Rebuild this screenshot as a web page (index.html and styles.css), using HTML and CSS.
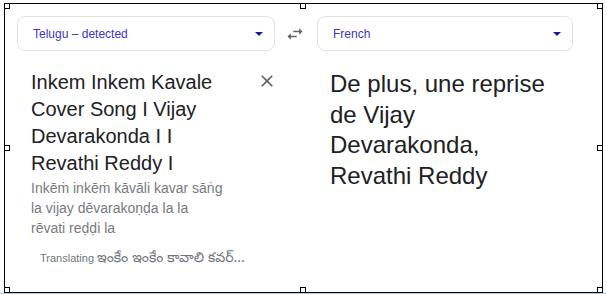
FILE: index.html
```html
<!DOCTYPE html>
<html lang="en">
<head>
    <meta charset="UTF-8">
    <title>Translate</title>
    <link rel="stylesheet" href="styles.css">
</head>
<body>
    <div class="frame">
        <div class="lang-bar">
            <div class="lang-select">
                <span class="lang-name">Telugu – detected</span>
                <span class="caret"></span>
            </div>
            <div class="swap">
                <svg width="20" height="20" viewBox="0 0 24 24"><path d="M6.99 11L3 15l3.99 4v-3H14v-2H6.99v-3zM21 9l-3.99-4v3H10v2h7.01v3L21 9z"/></svg>
            </div>
            <div class="lang-select">
                <span class="lang-name">French</span>
                <span class="caret"></span>
            </div>
        </div>

        <div class="panes">
            <div class="pane source">
                <div class="source-row">
                    <div class="source-text">Inkem Inkem Kavale Cover Song I Vijay Devarakonda I I Revathi Reddy I</div>
                    <div class="clear">
                        <svg width="20" height="20" viewBox="0 0 24 24"><path d="M19 6.41L17.59 5 12 10.59 6.41 5 5 6.41 10.59 12 5 17.59 6.41 19 12 13.41 17.59 19 19 17.59 13.41 12z"/></svg>
                    </div>
                </div>
                <div class="translit">Inkēṁ inkēṁ kāvāli kavar sāṅg la vijay dēvarakoṇḍa la la rēvati reḍḍi la</div>
                <div class="status">Translating <span class="telugu">ఇంకేం ఇంకేం కావాలి కవర్...</span></div>
            </div>
            <div class="pane target">De plus, une reprise de Vijay Devarakonda, Revathi Reddy</div>
        </div>

        <!-- selection handles -->
        <span class="handle tl"></span>
        <span class="handle tm"></span>
        <span class="handle tr"></span>
        <span class="handle ml"></span>
        <span class="handle mr"></span>
        <span class="handle bl"></span>
        <span class="handle bm"></span>
        <span class="handle br"></span>
    </div>
    <div class="blue-line"></div>
</body>
</html>
```

FILE: styles.css
```css
*{
    margin: 0;
    padding: 0;
    box-sizing: border-box;
}
body{
    background: #fff;
    font-family: "Liberation Sans", Arial, sans-serif;
    color: #202124;
}
.frame{
    position: relative;
    width: 599px;
    height: 290px;
    margin: 3px 0 0 4px;
    border: 1px solid #000;
    padding: 12px 28px 0 12px;
}
.lang-bar, .panes{
    display: grid;
    grid-template-columns: 258px 42px 256px;
}
.lang-select{
    height: 35px;
    border: 1px solid #e0e2e6;
    border-radius: 8px;
    display: flex;
    align-items: center;
    justify-content: space-between;
    padding: 0 11px 0 15px;
}
.lang-name{
    font-size: 12px;
    color: #3b34c8;
}
.caret{
    width: 0;
    height: 0;
    border-left: 4px solid transparent;
    border-right: 4px solid transparent;
    border-top: 4px solid #1c1a9c;
}
.swap{
    display: flex;
    align-items: center;
    justify-content: center;
    padding-right: 3px;
}
.swap svg, .clear svg{
    fill: #5f6368;
}
.pane{
    padding-top: 18px;
}
.source{
    padding-left: 14px;
}
.source-row{
    display: flex;
    justify-content: space-between;
}
.source-text{
    width: 192px;
    font-size: 20px;
    line-height: 27px;
}
.clear{
    margin-top: 2px;
    margin-right: -2px;
    height: 20px;
}
.translit{
    width: 194px;
    margin-top: 1px;
    font-size: 14px;
    line-height: 20px;
    color: #777a7e;
}
.status{
    margin-top: 12px;
    padding-left: 9px;
    font-size: 11px;
    line-height: 16px;
    color: #70757a;
}
.telugu{
    font-family: "Noto Sans Telugu", "Noto Sans", sans-serif;
    font-size: 14px;
}
.target{
    grid-column: 3;
    padding-left: 13px;
    padding-right: 13px;
    font-size: 24px;
    line-height: 30.5px;
}
.handle{
    position: absolute;
    width: 6px;
    height: 6px;
    background: #fff;
    border: 1px solid #000;
}
.tl{ left: -1px; top: -1px; }
.tm{ left: 295px; top: -1px; }
.tr{ right: -1px; top: -1px; }
.ml{ left: -1px; top: 141px; }
.mr{ right: -1px; top: 141px; }
.bl{ left: -1px; bottom: -1px; }
.bm{ left: 295px; bottom: -1px; }
.br{ right: -1px; bottom: -1px; }
.blue-line{
    height: 2px;
    background: #a9d1ee;
}
```
